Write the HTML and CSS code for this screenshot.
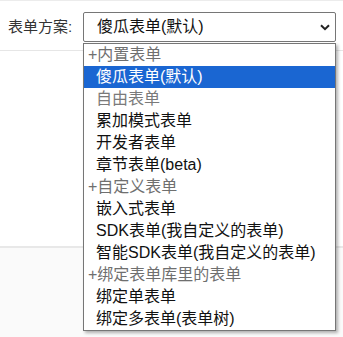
FILE: index.html
```html
<!DOCTYPE html>
<html>
<head>
<meta charset="utf-8">
<link rel="stylesheet" href="styles.css">
</head>
<body>
<div class="page">
  <div class="row row-top">
    <span class="label">表单方案:</span>
    <div class="select-wrap">
      <div class="select">
        <span class="select-text">傻瓜表单(默认)</span>
        <svg class="chev" width="10" height="7" viewBox="0 0 10 7"><path d="M1 1.2 L5 5.2 L9 1.2" fill="none" stroke="#222" stroke-width="2"/></svg>
      </div>
      <ul class="dropdown">
        <li class="grp">+内置表单</li>
        <li class="opt sel">傻瓜表单(默认)</li>
        <li class="opt dis">自由表单</li>
        <li class="opt">累加模式表单</li>
        <li class="opt">开发者表单</li>
        <li class="opt">章节表单(beta)</li>
        <li class="grp">+自定义表单</li>
        <li class="opt">嵌入式表单</li>
        <li class="opt">SDK表单(我自定义的表单)</li>
        <li class="opt">智能SDK表单(我自定义的表单)</li>
        <li class="grp">+绑定表单库里的表单</li>
        <li class="opt">绑定单表单</li>
        <li class="opt">绑定多表单(表单树)</li>
      </ul>
    </div>
  </div>
  <div class="row row-mid"></div>
  <div class="row row-bottom"></div>
</div>
</body>
</html>
```

FILE: styles.css
```css
html, body {
  margin: 0;
  padding: 0;
  background: #ffffff;
}
body {
  font-family: "Liberation Sans", "Noto Sans CJK SC", sans-serif;
  width: 343px;
  height: 337px;
  overflow: hidden;
}
.page {
  border-top: 1px solid #ececec;
}
.row-top {
  height: 49px;
  border-bottom: 1px solid #e6e6e6;
  display: flex;
  align-items: flex-start;
  padding-left: 8px;
}
.label {
  font-size: 15px;
  line-height: 20px;
  color: #333;
  margin-top: 16px;
  width: 75px;
}
.select-wrap {
  position: relative;
  margin-top: 11px;
}
.select {
  box-sizing: border-box;
  width: 253px;
  height: 30px;
  border: 1px solid #767676;
  border-radius: 2px;
  background: #fff;
  display: flex;
  align-items: center;
  justify-content: space-between;
  padding: 0 5px 0 13px;
}
.select-text {
  font-size: 16px;
  line-height: 20px;
  color: #111;
}
.chev {
  display: block;
}
.dropdown {
  position: absolute;
  left: 0;
  top: 31px;
  width: 253px;
  box-sizing: border-box;
  margin: 0;
  padding: 0;
  list-style: none;
  background: #fff;
  border: 1px solid #767676;
  box-shadow: 2px 2px 3px rgba(0, 0, 0, 0.3);
  z-index: 10;
}
.dropdown li {
  height: 22px;
  line-height: 22px;
  font-size: 16px;
  white-space: nowrap;
  color: #111;
}
.grp {
  padding-left: 4px;
  color: #6f6f6f !important;
}
.opt {
  padding-left: 12px;
}
.opt.dis {
  color: #7a7a7a;
}
.opt.sel {
  background: #1a66d2;
  color: #fff;
}
.row-mid {
  height: 195px;
  border-bottom: 2px solid #e8e8e8;
  background: #fff;
}
.row-bottom {
  height: 90px;
  background: #fafafa;
}
```
